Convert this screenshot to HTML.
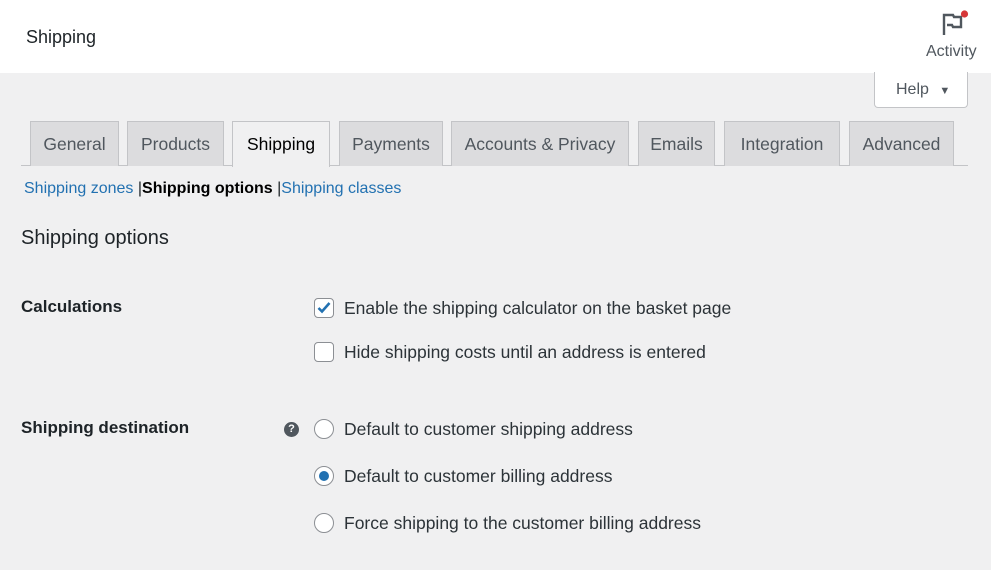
<!DOCTYPE html>
<html><head><meta charset="utf-8"><style>
*{margin:0;padding:0;box-sizing:border-box}
body{width:991px;height:570px;background:#f0f0f1;font-family:"Liberation Sans",sans-serif;color:#1d2327;position:relative;overflow:hidden;font-size:17px}
.a{position:absolute;white-space:nowrap}
.hdr{position:absolute;left:0;top:0;width:991px;height:73px;background:#fff}
.tab{position:absolute;top:121px;height:45px;background:#dcdcde;border:1px solid #c3c4c7;border-bottom:none;color:#50575e;font-size:17.5px;text-align:center;line-height:44px}
.tab.on{background:#f0f0f1;color:#000;height:46px}
.cb{position:absolute;left:314px;width:20px;height:20px;border:1px solid #8c8f94;border-radius:4px;background:#fff}
.rd{position:absolute;left:314px;width:20px;height:20px;border:1px solid #8c8f94;border-radius:50%;background:#fff}
.lbl{position:absolute;left:344px;color:#2c3338;font-size:17.5px}
.th{position:absolute;left:21px;font-weight:bold;font-size:17px;color:#1d2327}
</style></head><body>
<div class="hdr"></div>
<div class="a" style="left:26px;top:27px;font-size:18px;color:#1d2327">Shipping</div>
<svg class="a" style="left:940px;top:10px" width="30" height="28" viewBox="0 0 30 28"><path d="M4 25V5h9l1 2h7v10h-8l-1-2H7" fill="none" stroke="#50575e" stroke-width="2.4"/><circle cx="24.5" cy="4" r="3.6" fill="#d63638"/></svg>
<div class="a" style="left:926px;top:43px;font-size:16px;color:#50575e">Activity</div>
<div class="a" style="left:874px;top:72px;width:94px;height:36px;background:#fff;border:1px solid #c3c4c7;border-top:none;border-radius:0 0 4px 4px;color:#50575e;font-size:16px;line-height:36px;padding-left:21px">Help <span style="font-size:11px;margin-left:6px">▼</span></div>
<div class="a" style="left:21px;top:165px;width:947px;height:1px;background:#c3c4c7"></div>
<div class="tab" style="left:30px;width:89px">General</div>
<div class="tab" style="left:127px;width:97px">Products</div>
<div class="tab on" style="left:232px;width:98px">Shipping</div>
<div class="tab" style="left:339px;width:104px">Payments</div>
<div class="tab" style="left:451px;width:178px">Accounts &amp; Privacy</div>
<div class="tab" style="left:638px;width:77px">Emails</div>
<div class="tab" style="left:724px;width:116px">Integration</div>
<div class="tab" style="left:849px;width:105px">Advanced</div>
<div class="a" style="left:24px;top:180px;font-size:16px;color:#2271b1">Shipping zones <span style="color:#1d2327">|</span><b style="color:#000">Shipping options</b> <span style="color:#1d2327">|</span>Shipping classes</div>
<div class="a" style="left:21px;top:227px;font-size:20px;color:#1d2327">Shipping options</div>
<div class="th" style="top:297px">Calculations</div>
<div class="cb" style="top:298px"><svg width="18" height="18" viewBox="0 0 18 18"><path d="M3.5 9l3.5 3.5L14.5 4" fill="none" stroke="#2271b1" stroke-width="2.6"/></svg></div>
<div class="lbl" style="top:298px">Enable the shipping calculator on the basket page</div>
<div class="cb" style="top:342px"></div>
<div class="lbl" style="top:342px">Hide shipping costs until an address is entered</div>
<div class="th" style="top:418px">Shipping destination</div>
<div class="a" style="left:284px;top:422px;width:15px;height:15px;border-radius:50%;background:#50575e;color:#fff;font-size:11px;font-weight:bold;text-align:center;line-height:15px">?</div>
<div class="rd" style="top:419px"></div>
<div class="lbl" style="top:419px">Default to customer shipping address</div>
<div class="rd" style="top:466px"><div style="position:absolute;left:4px;top:4px;width:10px;height:10px;border-radius:50%;background:#2271b1"></div></div>
<div class="lbl" style="top:466px">Default to customer billing address</div>
<div class="rd" style="top:513px"></div>
<div class="lbl" style="top:513px">Force shipping to the customer billing address</div>
</body></html>
